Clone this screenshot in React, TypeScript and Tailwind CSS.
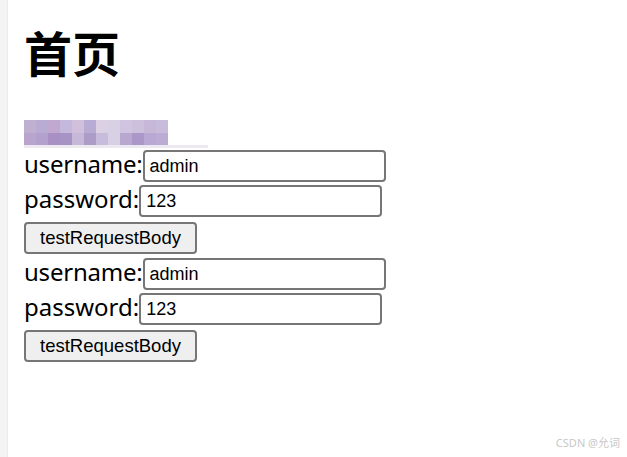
const mosaicTop = [
  "#c0b0d0", "#b8acd4", "#c0a8d0", "#c4b8dc", "#d0c0dc", "#b8acd4",
  "#dcd0e4", "#d8d0e4", "#d0c4e0", "#ccc0dc", "#c8b8d8", "#c8bcdc",
];
const mosaicBottom = [
  "#b8a4cc", "#b4a0cc", "#a890c4", "#a894c4", "#c8b8d8", "#ac9cc8",
  "#c8bcdc", "#d8d0e4", "#b8a8d0", "#ac98c8", "#b8a8d4", "#bcacd4",
];

function Field({ label, value, className, tight }: { label: string; value: string; className: string; tight?: boolean }) {
  return (
    <div className={`flex items-center h-[32px] ${className}`}>
      <span
        className={`text-[24px] leading-[32px] pb-[4px] text-black ${tight ? "tracking-[-0.22px]" : ""}`}
        style={{ fontFamily: '"Noto Sans", sans-serif' }}
      >
        {label}
      </span>
      <div className="w-[243px] h-[32px] border-2 border-[#767676] rounded-[4px] bg-white flex items-center pl-[5px]">
        <span className="text-[18px] text-black" style={{ fontFamily: '"Liberation Sans", Arial, sans-serif' }}>{value}</span>
      </div>
    </div>
  );
}

function SubmitButton({ className }: { className: string }) {
  return (
    <div className={className}>
      <button
        className="w-[173px] h-[32px] border-2 border-[#767676] rounded-[4px] bg-[#efefef] text-[18.5px] text-black"
        style={{ fontFamily: '"Liberation Sans", Arial, sans-serif' }}
      >
        testRequestBody
      </button>
    </div>
  );
}

export default function App() {
  return (
    <div className="relative w-[627px] h-[457px] bg-white flex overflow-hidden">
      <div className="w-[8px] h-full bg-[#f4f4f4] border-r border-[#ececec]" />
      <div className="flex flex-col pl-[16px]">
        <h1
          className="pt-[27px] text-[48px] leading-[48px] font-bold text-black"
          style={{ fontFamily: '"Noto Sans CJK SC", sans-serif' }}
        >
          首页
        </h1>
        <div className="mt-[45px] flex flex-col">
          <div className="flex h-[13px]">
            {mosaicTop.map((c, i) => (
              <div key={i} className="w-[12px] h-full" style={{ background: c }} />
            ))}
          </div>
          <div className="flex h-[12px]">
            {mosaicBottom.map((c, i) => (
              <div key={i} className="w-[12px] h-full" style={{ background: c }} />
            ))}
          </div>
          <div className="w-[184px] h-[3px] bg-[#ece9f0]" />
        </div>
        <Field label="username:" value="admin" className="mt-[2px]" tight />
        <Field label="password:" value="123" className="mt-[3px]" />
        <SubmitButton className="mt-[5px]" />
        <Field label="username:" value="admin" className="mt-[4px]" tight />
        <Field label="password:" value="123" className="mt-[3px]" />
        <SubmitButton className="mt-[5px]" />
      </div>
      <span
        className="absolute right-[7px] bottom-[6px] text-[11px] text-[#c8c8c8]"
        style={{ fontFamily: '"Noto Sans", "Noto Sans CJK SC", sans-serif' }}
      >
        CSDN @允词
      </span>
    </div>
  );
}
